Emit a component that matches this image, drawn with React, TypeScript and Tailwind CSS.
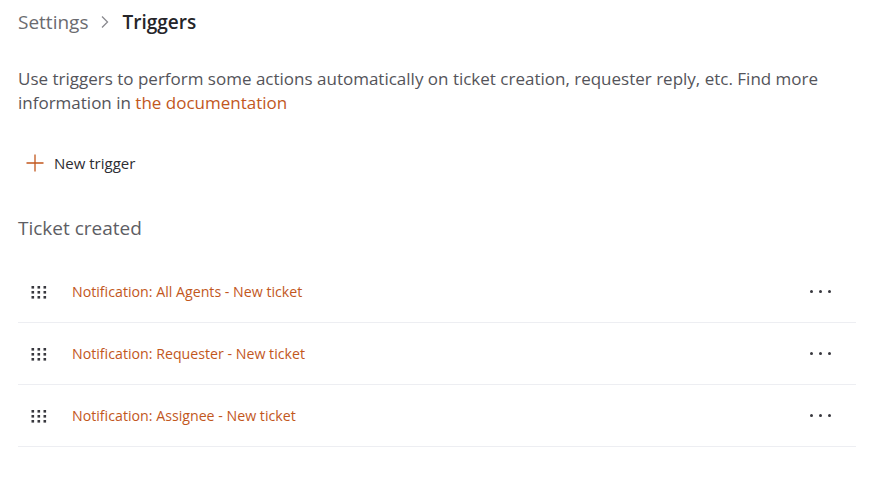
const triggers = [
  "Notification: All Agents - New ticket",
  "Notification: Requester - New ticket",
  "Notification: Assignee - New ticket",
];

const GripIcon = () => (
  <svg width="16" height="14" viewBox="0 0 16 14" className="shrink-0">
    {[0, 1, 2].map((r) =>
      [0, 1, 2].map((c) => (
        <rect key={`${r}-${c}`} x={0.5 + c * 6} y={1 + r * 5} width="2.6" height="2.6" fill="#38383e" />
      ))
    )}
  </svg>
);

const App = () => {
  return (
    <div
      className="w-[880px] h-[496px] bg-white px-[18px] pt-[8px]"
      style={{ fontFamily: '"Open Sans", "Noto Sans", sans-serif' }}
    >
      <div className="flex items-center h-[28px] text-[19px]">
        <span className="text-[#6b6b70]">Settings</span>
        <svg width="10" height="14" viewBox="0 0 10 14" className="mx-[12px]">
          <path d="M2 1.5 L7.5 7 L2 12.5" fill="none" stroke="#8a8a8f" strokeWidth="1.3" />
        </svg>
        <span className="font-semibold text-[#252529]">Triggers</span>
      </div>

      <p className="mt-[31px] text-[17px] leading-[24px] text-[#54545a] w-[830px]">
        Use triggers to perform some actions automatically on ticket creation, requester reply, etc. Find more
        <br />
        information in <a className="text-[#c2571d]">the documentation</a>
      </p>

      <button className="mt-[30px] ml-[8px] flex items-center gap-[10px] h-[36px] text-[15px] text-[#2d2d33]">
        <svg width="18" height="18" viewBox="0 0 18 18">
          <path d="M9 0.5 V17.5 M0.5 9 H17.5" stroke="#c2571d" strokeWidth="1.3" />
        </svg>
        New trigger
      </button>

      <h2 className="mt-[33px] text-[19px] text-[#5e5e64] leading-[28px]">Ticket created</h2>

      <div className="mt-[19px] w-[838px]">
        {triggers.map((t) => (
          <div key={t} className="flex items-center h-[62px] border-b border-[#edeef2] pl-[13px] pr-[25px]">
            <GripIcon />
            <span className="ml-[25px] text-[14.2px] text-[#c2571d]">{t}</span>
            <span className="ml-auto flex gap-[6px]">
              <span className="w-[3px] h-[3px] rounded-full bg-[#38383e]" />
              <span className="w-[3px] h-[3px] rounded-full bg-[#38383e]" />
              <span className="w-[3px] h-[3px] rounded-full bg-[#38383e]" />
            </span>
          </div>
        ))}
      </div>
    </div>
  );
};

export default App;
